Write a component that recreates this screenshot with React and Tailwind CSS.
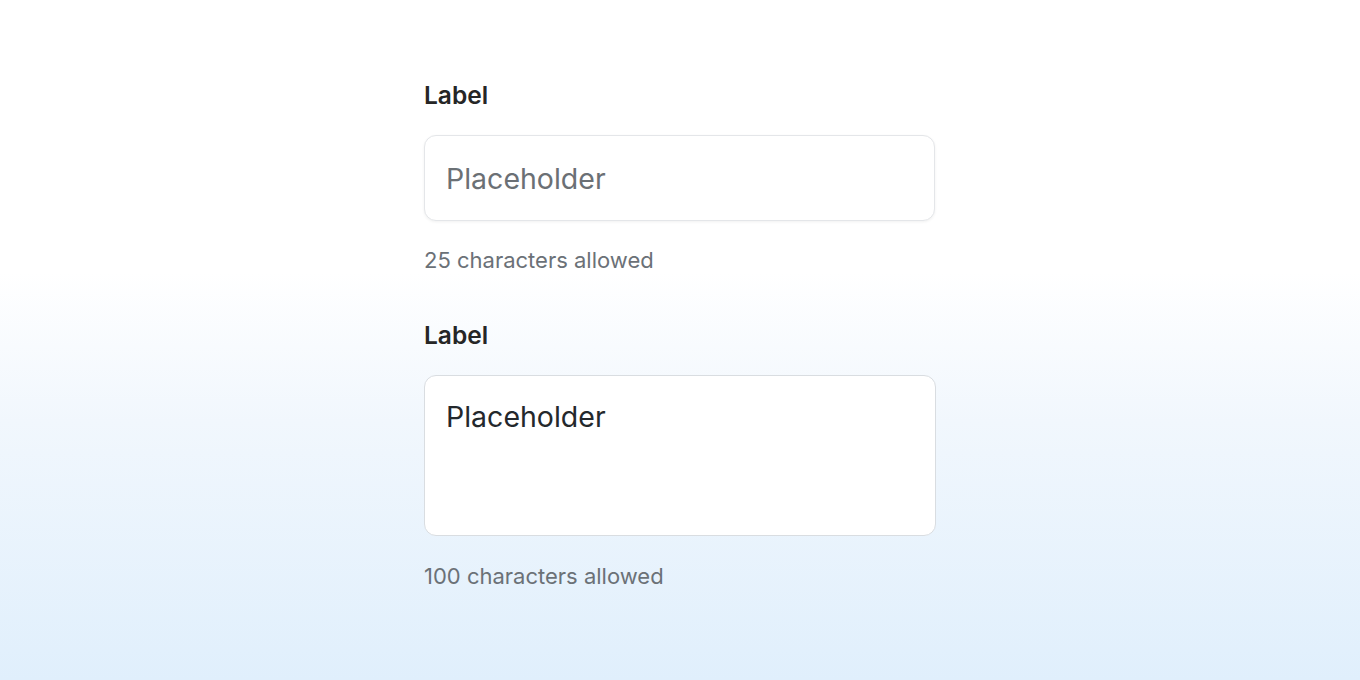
import React from "react";

export default function App() {
  return (
    <div
      className="w-[1360px] h-[680px] overflow-hidden bg-[linear-gradient(to_bottom,#ffffff_0%,#ffffff_40%,#f1f7fd_62%,#e0effc_100%)]"
      style={{ fontFamily: "Inter, 'Noto Sans', sans-serif" }}
    >
      <div className="ml-[424px] w-[512px] pt-[79px] flex flex-col">
        <label className="text-[24.5px] leading-[32px] font-semibold text-[#262626]">Label</label>
        <input
          type="text"
          placeholder="Placeholder"
          className="mt-[24px] w-[511px] h-[86px] rounded-[12px] border border-[#e4e6e9] bg-white px-[21px] text-[28.5px] text-[#1f2328] placeholder:text-[#6b7075] shadow-[0_1px_3px_rgba(0,0,0,0.06)] outline-none"
        />
        <p className="mt-[25px] text-[22px] leading-[28px] text-[#6b7177]">25 characters allowed</p>
        <label className="mt-[45px] text-[24.5px] leading-[32px] font-semibold text-[#262626]">Label</label>
        <textarea
          placeholder="Placeholder"
          className="mt-[24px] w-[512px] h-[161px] resize-none rounded-[12px] border border-[#d9dde1] bg-white px-[21px] pt-[24px] text-[28.5px] leading-[34px] text-[#1f2328] placeholder:text-[#24282c] outline-none"
        />
        <p className="mt-[26px] text-[22px] leading-[28px] text-[#6b7177]">100 characters allowed</p>
      </div>
    </div>
  );
}
